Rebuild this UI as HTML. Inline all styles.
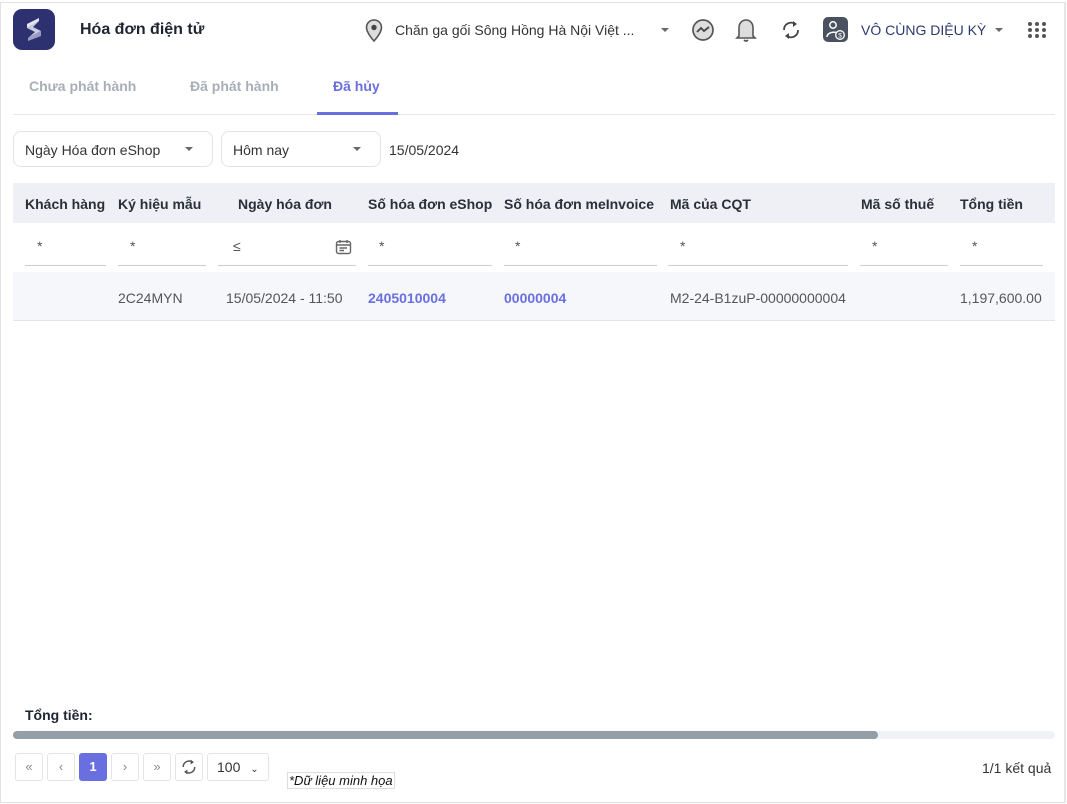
<!DOCTYPE html>
<html><head><meta charset="utf-8"><style>
*{box-sizing:border-box;margin:0;padding:0}
body{width:1067px;height:804px;background:#fff;font-family:"Liberation Sans",sans-serif;position:relative;overflow:hidden;color:#333}
.frame{position:absolute;left:0;top:2px;width:1066px;height:801px;border:1px solid #e2e2e2;border-right:2px solid #e6e6e6}
.a{position:absolute;white-space:nowrap}
.b{font-weight:bold}
.tab{font-size:14px;font-weight:bold;color:#a8aeb8;top:78px}
.sel{position:absolute;top:131px;height:36px;border:1px solid #e1e3e8;border-radius:8px;font-size:14px;color:#333;padding:10px 11px}
.caret{position:absolute;width:0;height:0;border-left:4px solid transparent;border-right:4px solid transparent;border-top:4px solid #666}
.th{font-size:14px;font-weight:bold;color:#2a2f38;top:196px}
.fl{position:absolute;top:265px;height:1px;background:#c9ced6}
.st{font-size:14px;color:#555;top:238px}
.td{font-size:14px;color:#555;top:290px}
.lk{color:#6a6fe0;font-weight:bold}
.pb{position:absolute;top:753px;width:28px;height:28px;border:1px solid #e2e4e8;border-radius:3px;text-align:center;line-height:26px;font-size:13px;color:#888}
</style></head><body>
<div class="frame"></div>
<div class="a" style="left:13px;top:9px;width:42px;height:41px;background:#2e3170;border-radius:9px">
<svg width="42" height="41" viewBox="0 0 42 41"><path d="M26 12 L14 19 L22 23 L15 29 L28 22 L20 18 Z" fill="#c9cbe0"/><path d="M15 29 L28 22 L28 27 L15 32 Z" fill="#9a9dc0"/><path d="M26 12 L14 19 L14 15 L26 9 Z" fill="#e4e5f0"/></svg></div>
<div class="a b" style="left:80px;top:21px;font-size:16px;color:#1e2430">Hóa đơn điện tử</div>
<svg class="a" style="left:364px;top:18px" width="20" height="25" viewBox="0 0 20 25"><path d="M10 2C5.5 2 2.5 5.5 2.5 9.5 2.5 15 10 23 10 23S17.5 15 17.5 9.5C17.5 5.5 14.5 2 10 2Z" fill="#ddd" stroke="#555" stroke-width="1.6"/><circle cx="10" cy="9.5" r="2.7" fill="#444"/></svg>
<div class="a" style="left:395px;top:22px;font-size:14px;color:#333">Chăn ga gối Sông Hồng Hà Nội Việt ...</div>
<div class="caret" style="left:661px;top:28px"></div>
<svg class="a" style="left:691px;top:18px" width="24" height="24" viewBox="0 0 24 24"><circle cx="12" cy="12" r="10" fill="#ddd" stroke="#555" stroke-width="1.7"/><path d="M6 14 L10 10 L13 13 L18 9" fill="none" stroke="#444" stroke-width="1.8"/></svg>
<svg class="a" style="left:734px;top:16px" width="24" height="28" viewBox="0 0 24 28"><path d="M5 20 V12 C5 7 8 4 12 4 C16 4 19 7 19 12 V20 L21 22 H3 Z" fill="#ddd" stroke="#555" stroke-width="1.6"/><path d="M10 24 Q12 26 14 24" stroke="#555" stroke-width="1.6" fill="none"/></svg>
<svg class="a" style="left:780px;top:19px" width="22" height="22" viewBox="0 0 22 22"><path d="M4 11 A7 7 0 0 1 15 5 M18 11 A7 7 0 0 1 7 17" fill="none" stroke="#444" stroke-width="1.8"/><path d="M13 2 L17 5 L13 8Z M9 14 L5 17 L9 20Z" fill="#444"/></svg>
<div class="a" style="left:823px;top:17px;width:25px;height:25px;background:#4a5260;border-radius:5px">
<svg width="25" height="25" viewBox="0 0 25 25"><circle cx="10" cy="8" r="3.2" fill="none" stroke="#fff" stroke-width="1.5"/><path d="M4 20 C4 14 16 14 16 18" fill="none" stroke="#fff" stroke-width="1.5"/><circle cx="17" cy="18" r="4.3" fill="#4a5260" stroke="#fff" stroke-width="1.3"/><text x="17" y="20.5" font-size="6.5" fill="#fff" text-anchor="middle" font-family="Liberation Sans">$</text></svg></div>
<div class="a" style="left:861px;top:22px;font-size:14px;color:#2c3a6b">VÔ CÙNG DIỆU KỲ</div>
<div class="caret" style="left:995px;top:28px"></div>
<svg class="a" style="left:1027px;top:21px" width="20" height="18" viewBox="0 0 20 18"><g fill="#555"><circle cx="3" cy="3" r="2"/><circle cx="10" cy="3" r="2"/><circle cx="17" cy="3" r="2"/><circle cx="3" cy="9" r="2"/><circle cx="10" cy="9" r="2"/><circle cx="17" cy="9" r="2"/><circle cx="3" cy="15" r="2"/><circle cx="10" cy="15" r="2"/><circle cx="17" cy="15" r="2"/></g></svg>
<div class="a tab" style="left:29px">Chưa phát hành</div>
<div class="a tab" style="left:190px">Đã phát hành</div>
<div class="a tab" style="left:333px;color:#6a6fe0">Đã hủy</div>
<div class="a" style="left:13px;top:114px;width:1042px;height:1px;background:#e4e6ea"></div>
<div class="a" style="left:317px;top:112px;width:81px;height:3px;background:#6a6fe0"></div>
<div class="sel" style="left:13px;width:200px">Ngày Hóa đơn eShop</div><div class="caret" style="left:185px;top:147px"></div>
<div class="sel" style="left:221px;width:160px">Hôm nay</div><div class="caret" style="left:353px;top:147px"></div>
<div class="a" style="left:389px;top:142px;font-size:14px">15/05/2024</div>
<div class="a" style="left:13px;top:183px;width:1042px;height:40px;background:#eef0f5"></div>
<div class="a th" style="left:25px">Khách hàng</div>
<div class="a th" style="left:118px">Ký hiệu mẫu</div>
<div class="a th" style="left:238px">Ngày hóa đơn</div>
<div class="a th" style="left:368px">Số hóa đơn eShop</div>
<div class="a th" style="left:504px">Số hóa đơn meInvoice</div>
<div class="a th" style="left:670px">Mã của CQT</div>
<div class="a th" style="left:861px">Mã số thuế</div>
<div class="a th" style="left:960px">Tổng tiền</div>
<div class="fl" style="left:25px;width:81px"></div><div class="a st" style="left:37px">*</div>
<div class="fl" style="left:118px;width:88px"></div><div class="a st" style="left:130px">*</div>
<div class="fl" style="left:218px;width:138px"></div><div class="a st" style="left:233px">≤</div>
<svg class="a" style="left:335px;top:239px" width="17" height="16" viewBox="0 0 17 16"><rect x="1.5" y="2.5" width="14" height="12" rx="2" fill="none" stroke="#666" stroke-width="1.4"/><path d="M1.5 6 H15.5 M5 1 V4 M12 1 V4 M4.5 9 H12 M4.5 11.5 H9" stroke="#666" stroke-width="1.4"/></svg>
<div class="fl" style="left:368px;width:124px"></div><div class="a st" style="left:379px">*</div>
<div class="fl" style="left:504px;width:153px"></div><div class="a st" style="left:515px">*</div>
<div class="fl" style="left:668px;width:180px"></div><div class="a st" style="left:680px">*</div>
<div class="fl" style="left:860px;width:88px"></div><div class="a st" style="left:872px">*</div>
<div class="fl" style="left:960px;width:83px"></div><div class="a st" style="left:972px">*</div>
<div class="a" style="left:13px;top:272px;width:1042px;height:49px;background:#f6f7fb;border-bottom:1px solid #e3e5ea"></div>
<div class="a td" style="left:118px">2C24MYN</div>
<div class="a td" style="left:226px">15/05/2024 - 11:50</div>
<div class="a td lk" style="left:368px">2405010004</div>
<div class="a td lk" style="left:504px">00000004</div>
<div class="a td" style="left:670px">M2-24-B1zuP-00000000004</div>
<div class="a td" style="left:960px">1,197,600.00</div>
<div class="a b" style="left:25px;top:707px;font-size:14px;color:#1e2430">Tổng tiền:</div>
<div class="a" style="left:13px;top:731px;width:1042px;height:8px;background:#f1f2f5;border-radius:4px"></div>
<div class="a" style="left:13px;top:731px;width:865px;height:8px;background:#939ea9;border-radius:4px"></div>
<div class="pb" style="left:15px">«</div>
<div class="pb" style="left:47px">‹</div>
<div class="pb" style="left:79px;background:#6a6fe0;border-color:#6a6fe0;color:#fff;font-weight:bold">1</div>
<div class="pb" style="left:111px">›</div>
<div class="pb" style="left:143px">»</div>
<div class="pb" style="left:175px"><svg width="18" height="18" viewBox="0 0 22 22" style="margin-top:4px"><path d="M4 11 A7 7 0 0 1 15 5 M18 11 A7 7 0 0 1 7 17" fill="none" stroke="#555" stroke-width="1.8"/><path d="M13 2 L17 5 L13 8Z M9 14 L5 17 L9 20Z" fill="#555"/></svg></div>
<div class="pb" style="left:207px;width:62px;font-size:14px;color:#333;text-align:left;padding-left:9px">100 <span style="font-size:10px;margin-left:6px">&#8964;</span></div>
<div class="a" style="left:287px;top:772px;font-size:13px;font-style:italic;color:#111;border:1px solid #ddd;padding:0 1px">*Dữ liệu minh họa</div>
<div class="a" style="left:982px;top:760px;font-size:14px;color:#333">1/1 kết quả</div>
</body></html>
